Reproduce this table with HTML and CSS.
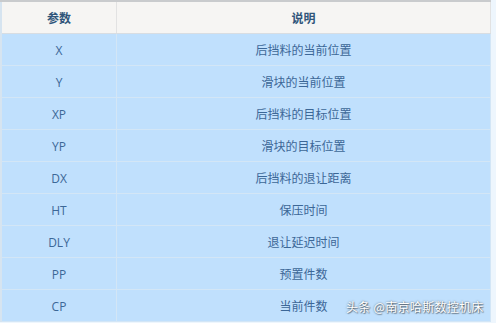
FILE: index.html
```html
<!DOCTYPE html>
<html lang="zh">
<head>
<meta charset="utf-8">
<link rel="stylesheet" href="styles.css">
</head>
<body>
<div class="wrap">
  <table class="params">
    <thead>
      <tr><th class="c1">参数</th><th class="c2">说明</th></tr>
    </thead>
    <tbody>
      <tr><td>X</td><td>后挡料的当前位置</td></tr>
      <tr><td>Y</td><td>滑块的当前位置</td></tr>
      <tr><td>XP</td><td>后挡料的目标位置</td></tr>
      <tr><td>YP</td><td>滑块的目标位置</td></tr>
      <tr><td>DX</td><td>后挡料的退让距离</td></tr>
      <tr><td>HT</td><td>保压时间</td></tr>
      <tr><td>DLY</td><td>退让延迟时间</td></tr>
      <tr><td>PP</td><td>预置件数</td></tr>
      <tr><td>CP</td><td>当前件数</td></tr>
    </tbody>
  </table>
  <div class="mark">头条 @南京哈斯数控机床</div>
</div>
</body>
</html>
```

FILE: styles.css
```css
html, body {
  margin: 0;
  padding: 0;
  background: #ffffff;
}
.wrap {
  position: relative;
  width: 496px;
  height: 323px;
  overflow: hidden;
  background: #eef6fd;
}
.params {
  width: 491px;
  border-collapse: collapse;
  border-top: 2px solid #c9cbcd;
  border-left: 2px solid #d6e4f0;
  font-family: "Open Sans", "Noto Sans CJK SC", sans-serif;
  font-size: 12px;
  table-layout: fixed;
}
.params th {
  height: 31px;
  padding: 0;
  background: #f6f5f3;
  color: #30557a;
  font-weight: bold;
  text-align: center;
  border-right: 1px solid #e2e2e2;
  border-bottom: 1px solid #d8dde2;
}
.params th.c1 {
  width: 114px;
}
.params td {
  height: 30px;
  padding: 1px 0 0;
  background: #c0e0fd;
  color: #3c6797;
  text-align: center;
  border-bottom: 1px solid #d3e6f6;
  border-right: 1px solid #d3e6f6;
}
.mark {
  position: absolute;
  left: 346px;
  top: 298px;
  font-family: "Noto Sans CJK SC", sans-serif;
  font-size: 12px;
  letter-spacing: 0.3px;
  color: #ffffff;
  text-shadow: 0 0 2px rgba(0,0,0,0.55), 1px 1px 1px rgba(0,0,0,0.4);
}
```
